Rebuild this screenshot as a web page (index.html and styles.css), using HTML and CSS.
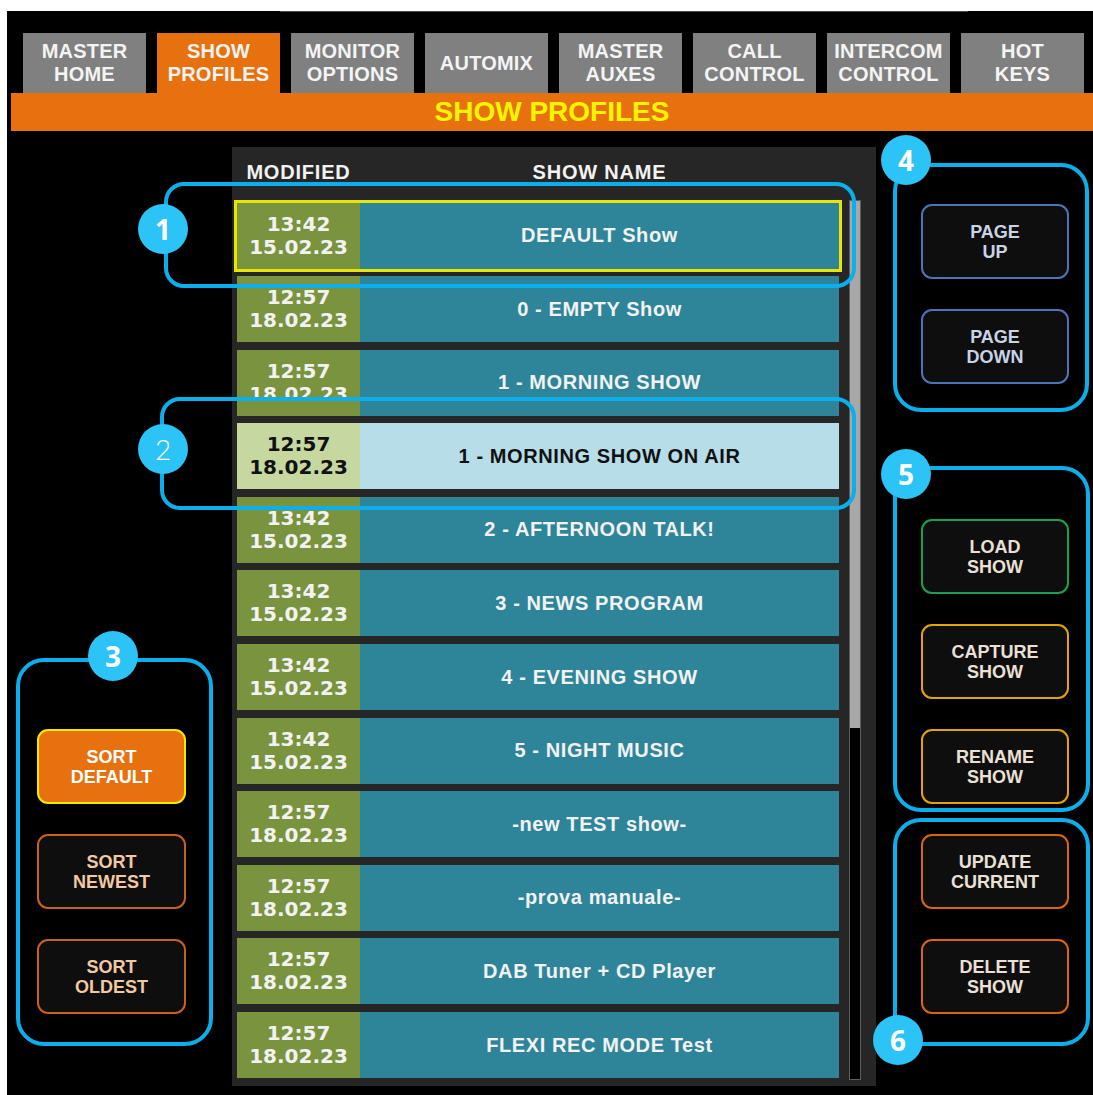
FILE: index.html
```html
<!DOCTYPE html>
<html>
<head>
<meta charset="utf-8">
<link rel="stylesheet" href="styles.css">
</head>
<body>
<div class="screen">
  <div class="topline"></div>
  <nav class="tabs">
    <div class="tab">MASTER<br>HOME</div>
    <div class="tab active">SHOW<br>PROFILES</div>
    <div class="tab">MONITOR<br>OPTIONS</div>
    <div class="tab">AUTOMIX</div>
    <div class="tab">MASTER<br>AUXES</div>
    <div class="tab">CALL<br>CONTROL</div>
    <div class="tab">INTERCOM<br>CONTROL</div>
    <div class="tab">HOT<br>KEYS</div>
  </nav>
  <div class="titlebar">SHOW PROFILES</div>
  <div class="content">
    <aside class="left-col">
      <div class="group g3">
        <span class="badge b3">3</span>
        <div class="btn sort-active">SORT<br>DEFAULT</div>
        <div class="btn sort">SORT<br>NEWEST</div>
        <div class="btn sort">SORT<br>OLDEST</div>
      </div>
    </aside>
    <section class="panel">
      <div class="list-head"><span class="h-mod">MODIFIED</span><span class="h-name">SHOW NAME</span></div>
      <div class="list-body">
        <div class="rows">
          <div class="row selected"><div class="date">13:42<br>15.02.23</div><div class="name">DEFAULT Show</div></div>
          <div class="row"><div class="date">12:57<br>18.02.23</div><div class="name">0 - EMPTY Show</div></div>
          <div class="row"><div class="date">12:57<br>18.02.23</div><div class="name">1 - MORNING SHOW</div></div>
          <div class="row onair"><div class="date">12:57<br>18.02.23</div><div class="name">1 - MORNING SHOW ON AIR</div></div>
          <div class="row"><div class="date">13:42<br>15.02.23</div><div class="name">2 - AFTERNOON TALK!</div></div>
          <div class="row"><div class="date">13:42<br>15.02.23</div><div class="name">3 - NEWS PROGRAM</div></div>
          <div class="row"><div class="date">13:42<br>15.02.23</div><div class="name">4 - EVENING SHOW</div></div>
          <div class="row"><div class="date">13:42<br>15.02.23</div><div class="name">5 - NIGHT MUSIC</div></div>
          <div class="row"><div class="date">12:57<br>18.02.23</div><div class="name">-new TEST show-</div></div>
          <div class="row"><div class="date">12:57<br>18.02.23</div><div class="name">-prova manuale-</div></div>
          <div class="row"><div class="date">12:57<br>18.02.23</div><div class="name">DAB Tuner + CD Player</div></div>
          <div class="row"><div class="date">12:57<br>18.02.23</div><div class="name">FLEXI REC MODE Test</div></div>
        </div>
        <div class="scrollbar"><div class="thumb"></div></div>
      </div>
    </section>
    <aside class="right-col">
      <div class="group g4">
        <span class="badge b4">4</span>
        <div class="btn page">PAGE<br>UP</div>
        <div class="btn page">PAGE<br>DOWN</div>
      </div>
      <div class="group g5">
        <span class="badge b5">5</span>
        <div class="btn load">LOAD<br>SHOW</div>
        <div class="btn amber">CAPTURE<br>SHOW</div>
        <div class="btn amber">RENAME<br>SHOW</div>
      </div>
      <div class="group g6">
        <span class="badge b6">6</span>
        <div class="btn orange">UPDATE<br>CURRENT</div>
        <div class="btn orange">DELETE<br>SHOW</div>
      </div>
    </aside>
    <div class="callout c1"><span class="badge bc1">1</span></div>
    <div class="callout c2"><span class="badge bc2 thin">2</span></div>
  </div>
</div>
</body>
</html>
```
FILE: styles.css
```css
body {
  margin: 0;
  background: #ffffff;
  width: 1093px;
  height: 1095px;
  overflow: hidden;
}

.screen {
  margin: 11px 0 0 7px;
  width: 1086px;
  height: 1084px;
  background: #000000;
  font-family: "Liberation Sans", Arial, sans-serif;
  font-weight: bold;
}

.topline {
  margin-left: 273px;
  width: 688px;
  height: 1px;
  background: #4a4a4a;
}

.tabs {
  display: flex;
  gap: 11px;
  padding: 21px 0 0 16px;
  height: 60px;
}

.tab {
  width: 123px;
  height: 60px;
  flex: none;
  background: #808080;
  color: #f4f4f4;
  display: flex;
  align-items: center;
  justify-content: center;
  text-align: center;
  font-size: 20px;
  line-height: 23px;
  letter-spacing: 0.2px;
}

.tab.active {
  background: #e8710f;
}

.titlebar {
  margin-left: 4px;
  height: 38px;
  background: #e8710f;
  color: #f5f500;
  text-align: center;
  font-size: 28px;
  line-height: 38px;
}

.content {
  position: relative;
  display: flex;
  height: 964px;
}

.left-col {
  width: 225px;
  flex: none;
}

.panel {
  width: 644px;
  flex: none;
  margin-top: 16px;
  height: 939px;
  background: #262626;
}

.right-col {
  flex: 1;
}

.group {
  position: relative;
  box-sizing: border-box;
  border: 4px solid #0aafec;
  border-radius: 28px;
  display: flex;
  flex-direction: column;
  gap: 30px;
}

.g3 { margin: 527px 0 0 9px; width: 197px; height: 388px; padding: 67px 0 0 17px; }
.g4 { margin: 32px 0 0 17px; width: 196px; height: 249px; padding: 37px 0 0 24px; }
.g5 { margin: 54px 0 0 17px; width: 197px; height: 346px; padding: 49px 0 0 24px; }
.g6 { margin: 6px 0 0 17px; width: 197px; height: 228px; padding: 12px 0 0 24px; }

.btn {
  width: 148px;
  height: 75px;
  flex: none;
  box-sizing: border-box;
  border: 2.5px solid #888;
  border-radius: 11px;
  background: #0e0e0e;
  display: flex;
  align-items: center;
  justify-content: center;
  text-align: center;
  font-size: 18px;
  line-height: 20px;
  color: #ebe0d5;
}

.g3 .btn { width: 149px; }

.btn.sort-active { background: #e8710f; border-color: #eeea00; color: #ffffff; }
.btn.sort { border-color: #c8621a; color: #f2c9a2; }
.btn.page { border-color: #4d74b8; color: #c9d3e6; }
.btn.load { border-color: #19a24a; }
.btn.amber { border-color: #e3a600; }
.btn.orange { border-color: #d9660f; }

.badge {
  position: absolute;
  width: 50px;
  height: 50px;
  border-radius: 50%;
  background: #2cc3f6;
  color: #ffffff;
  font-family: "Noto Sans", "Open Sans", sans-serif;
  font-weight: 700;
  font-size: 28px;
  line-height: 50px;
  text-align: center;
  z-index: 2;
}

.badge.thin { font-weight: 300; font-family: "Lato", "Open Sans", sans-serif; }

.b3 { left: 68px; top: -31px; }
.b4 { left: -16px; top: -32px; }
.b5 { left: -16px; top: -21px; }
.b6 { left: -24px; top: 193px; }
.bc1 { left: -30px; top: 18px; }
.bc2 { left: -26px; top: 23px; }

.list-head {
  display: flex;
  box-sizing: border-box;
  height: 55px;
  padding: 13px 0 0 5px;
  color: #f2f2f2;
  font-size: 20px;
  line-height: 24px;
  letter-spacing: 0.8px;
}

.h-mod { width: 123px; text-align: center; }
.h-name { width: 479px; text-align: center; }

.list-body {
  display: flex;
  padding-left: 5px;
}

.rows {
  width: 602px;
  display: flex;
  flex-direction: column;
  gap: 7.6px;
  padding-top: 0.5px;
}

.row {
  height: 66px;
  display: flex;
  flex: none;
}

.row.selected {
  outline: 3px solid #e6e600;
}

.date {
  width: 123px;
  flex: none;
  background: #7a933f;
  color: #f2f2f2;
  font-family: "DejaVu Sans", sans-serif;
  font-weight: bold;
  font-size: 20px;
  line-height: 23px;
  display: flex;
  align-items: center;
  justify-content: center;
  text-align: center;
}

.name {
  flex: 1;
  background: #2e8499;
  color: #f2f2f2;
  font-size: 20px;
  letter-spacing: 0.6px;
  display: flex;
  align-items: center;
  justify-content: center;
}

.row.onair .date { background: #c6d8a0; color: #111111; }
.row.onair .name { background: #b7dde8; color: #111111; }

.scrollbar {
  margin-left: 10px;
  margin-top: -2px;
  width: 12px;
  height: 880px;
  box-sizing: border-box;
  border: 1px solid #5c5c5c;
  background: #000000;
}

.thumb {
  height: 527px;
  background: #a8a8a8;
}

.callout {
  position: absolute;
  box-sizing: border-box;
  border: 4px solid #0aafec;
  border-radius: 20px;
}

.c1 { left: 157px; top: 51px; width: 692px; height: 106px; }
.c2 { left: 153px; top: 266px; width: 696px; height: 113px; }
```
